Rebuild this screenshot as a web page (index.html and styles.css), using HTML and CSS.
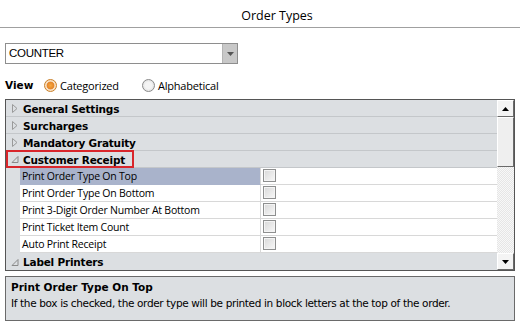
FILE: index.html
```html
<!DOCTYPE html>
<html lang="en">
<head>
<meta charset="UTF-8">
<title>Order Types</title>
<link rel="stylesheet" href="styles.css">
</head>
<body>
<div class="header">Order Types</div>

<div class="content">
    <div class="combo">
        <span class="combo-text">COUNTER</span>
        <span class="combo-btn">
            <svg width="7" height="4" viewBox="0 0 7 4"><path d="M0 0H7L3.5 4Z" fill="#555"/></svg>
        </span>
    </div>

    <div class="view-row">
        <span class="view-label">View</span>
        <label class="radio"><span class="radio-dot on"></span>Categorized</label>
        <label class="radio"><span class="radio-dot"></span>Alphabetical</label>
    </div>

    <div class="grid">
        <div class="rows">
            <div class="cat">
                <svg class="arrow" width="6" height="9" viewBox="0 0 6 9"><path d="M0.5 0.5L5 4.5L0.5 8.5Z" fill="none" stroke="#9a9a9a"/></svg>
                <span>General Settings</span>
            </div>
            <div class="cat">
                <svg class="arrow" width="6" height="9" viewBox="0 0 6 9"><path d="M0.5 0.5L5 4.5L0.5 8.5Z" fill="none" stroke="#9a9a9a"/></svg>
                <span>Surcharges</span>
            </div>
            <div class="cat">
                <svg class="arrow" width="6" height="9" viewBox="0 0 6 9"><path d="M0.5 0.5L5 4.5L0.5 8.5Z" fill="none" stroke="#9a9a9a"/></svg>
                <span>Mandatory Gratuity</span>
            </div>
            <div class="cat">
                <svg class="arrow" width="7" height="7" viewBox="0 0 7 7"><path d="M6.5 0.5V6.5H0.5Z" fill="none" stroke="#8a8a8a"/></svg>
                <span>Customer Receipt</span>
                <div class="focus-box"></div>
            </div>
            <div class="item">
                <div class="name selected">Print Order Type On Top</div>
                <div class="value"><span class="check"></span></div>
            </div>
            <div class="item">
                <div class="name">Print Order Type On Bottom</div>
                <div class="value"><span class="check"></span></div>
            </div>
            <div class="item">
                <div class="name">Print 3-Digit Order Number At Bottom</div>
                <div class="value"><span class="check"></span></div>
            </div>
            <div class="item">
                <div class="name">Print Ticket Item Count</div>
                <div class="value"><span class="check"></span></div>
            </div>
            <div class="item">
                <div class="name">Auto Print Receipt</div>
                <div class="value"><span class="check"></span></div>
            </div>
            <div class="cat last">
                <svg class="arrow" width="7" height="7" viewBox="0 0 7 7"><path d="M6.5 0.5V6.5H0.5Z" fill="none" stroke="#8a8a8a"/></svg>
                <span>Label Printers</span>
            </div>
        </div>
        <div class="scrollbar">
            <div class="sb-btn">
                <svg width="7" height="4" viewBox="0 0 7 4"><path d="M3.5 0L7 4H0Z" fill="#000"/></svg>
            </div>
            <div class="sb-thumb"></div>
            <div class="sb-track"></div>
            <div class="sb-btn">
                <svg width="7" height="4" viewBox="0 0 7 4"><path d="M0 0H7L3.5 4Z" fill="#000"/></svg>
            </div>
        </div>
    </div>

    <div class="desc">
        <div class="desc-title">Print Order Type On Top</div>
        <div class="desc-text">If the box is checked, the order type will be printed in block letters at the top of the order.</div>
    </div>
</div>
</body>
</html>
```

FILE: styles.css
```css
body, html {
    margin: 0;
    padding: 0;
    background: #fff;
}

body {
    font-family: "Open Sans", "DejaVu Sans", sans-serif;
    color: #000;
}

.header {
    height: 28px;
    line-height: 32px;
    text-align: center;
    font-size: 12.5px;
    padding-left: 34px;
    border-bottom: 1px solid #a0a0a0;
    box-sizing: border-box;
}

.content {
    padding: 15px 5px 0 5px;
}

.combo {
    display: flex;
    width: 233px;
    height: 21px;
    border: 1px solid #8e8e8e;
    box-sizing: border-box;
}

.combo-text {
    flex: 1;
    font-family: "Liberation Sans", sans-serif;
    font-size: 11.5px;
    line-height: 19px;
    padding-left: 3px;
    letter-spacing: -0.3px;
}

.combo-btn {
    width: 14px;
    background: #c8c8c8;
    border-left: 1px solid #b4b4b4;
    display: flex;
    align-items: center;
    justify-content: center;
}

.view-row {
    display: flex;
    align-items: center;
    height: 18px;
    margin-top: 12px;
    font-size: 11px;
    letter-spacing: -0.2px;
}

.view-label {
    font-family: "DejaVu Sans", sans-serif;
    font-weight: bold;
    font-size: 10.5px;
    letter-spacing: 0;
    width: 39px;
}

.radio {
    display: flex;
    align-items: center;
    margin-right: 23px;
}

.radio-dot {
    width: 11px;
    height: 11px;
    border-radius: 50%;
    border: 1px solid #8a8a8a;
    background: radial-gradient(circle, #f4f4f4 40%, #d6d6d6 100%);
    margin-right: 3px;
}

.radio-dot.on {
    border-color: #c9802a;
    background: radial-gradient(circle, #f7a83c 0, #e4852b 45%, #f8e2c6 55%, #f4d7b3 100%);
}

.grid {
    display: flex;
    margin-top: 5px;
    width: 510px;
    height: 172px;
    border: 1px solid #555;
    box-sizing: border-box;
    background: #dcdfe2;
}

.rows {
    flex: 1;
    display: flex;
    flex-direction: column;
}

.cat {
    position: relative;
    display: flex;
    align-items: center;
    height: 17px;
    padding-top: 1px;
    border-bottom: 1px solid #c4c7ca;
    box-sizing: border-box;
    font-family: "DejaVu Sans", sans-serif;
    font-weight: bold;
    font-size: 10.5px;
    letter-spacing: -0.2px;
}

.cat.last {
    border-bottom: none;
}

.arrow {
    width: 14px;
    margin-left: 2px;
    margin-right: 1px;
}

.focus-box {
    position: absolute;
    left: 0;
    top: -1px;
    width: 128px;
    height: 18px;
    border: 2px solid #d9262b;
    box-sizing: border-box;
}

.item {
    display: flex;
    height: 17px;
    padding-left: 14px;
}

.name {
    width: 241px;
    background: #fff;
    border-right: 1px solid #d8d8d8;
    border-bottom: 1px solid #d8d8d8;
    box-sizing: border-box;
    font-size: 10.5px;
    line-height: 17px;
    padding-left: 2px;
    letter-spacing: -0.22px;
}

.name.selected {
    background: #a9b3cb;
    border-bottom-color: #a9b3cb;
}

.value {
    flex: 1;
    background: #fff;
    border-bottom: 1px solid #d8d8d8;
    box-sizing: border-box;
    padding: 1px 0 0 2px;
}

.check {
    display: block;
    width: 13px;
    height: 13px;
    border: 1px solid #8e8f8f;
    box-sizing: border-box;
    background: linear-gradient(135deg, #d8d8d8, #f8f8f8);
    box-shadow: inset 0 0 0 1px #f4f4f4;
}

.scrollbar {
    width: 17px;
    display: flex;
    flex-direction: column;
    background: #dcdfe2;
}

.sb-btn {
    height: 17px;
    background: #f4f4f4;
    border: 1px solid #fff;
    border-right-color: #6a6a6a;
    border-bottom-color: #6a6a6a;
    box-sizing: border-box;
    display: flex;
    align-items: center;
    justify-content: center;
}

.sb-thumb {
    height: 50px;
    background: #efefef;
    border: 1px solid #fff;
    border-right-color: #6a6a6a;
    border-bottom-color: #6a6a6a;
    box-sizing: border-box;
}

.sb-track {
    flex: 1;
    background-color: #f2f2f2;
    background-image: repeating-conic-gradient(#e6e6e6 0 25%, #f8f8f8 0 50%);
    background-size: 2px 2px;
}

.desc {
    margin-top: 5px;
    width: 510px;
    height: 45px;
    border: 1px solid #6a6a6a;
    box-sizing: border-box;
    background: #dcdfe2;
    padding: 2px 5px;
    font-family: "DejaVu Sans", sans-serif;
    font-size: 10.5px;
}

.desc-title {
    font-weight: bold;
    font-size: 10.5px;
    line-height: 16px;
}

.desc-text {
    line-height: 16px;
    letter-spacing: -0.35px;
}
```
